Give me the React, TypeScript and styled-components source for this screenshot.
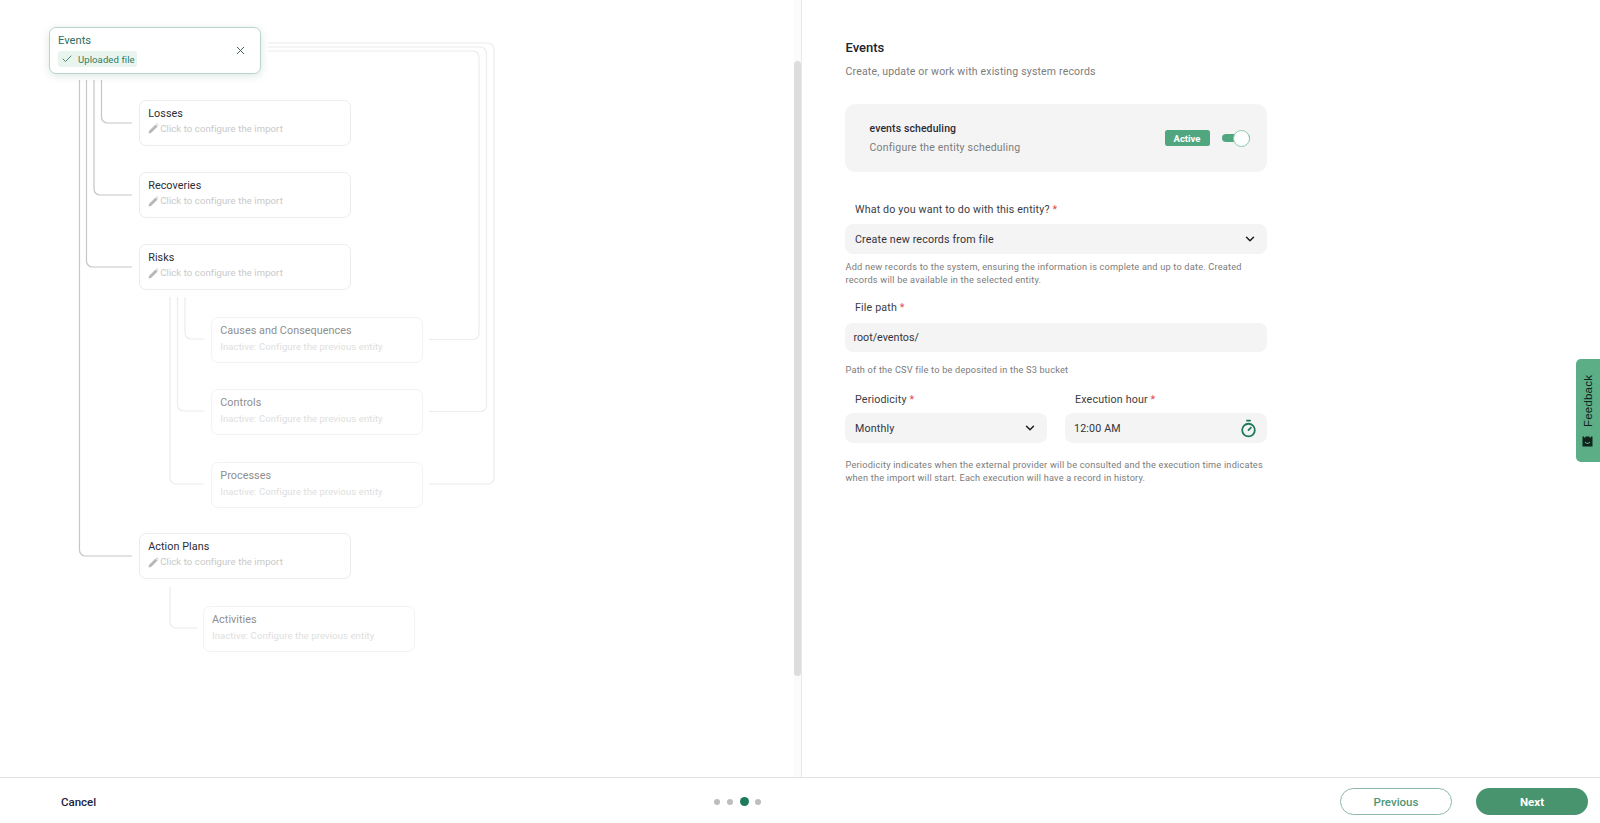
import React from 'react';
import styled, { createGlobalStyle } from 'styled-components';
import { Check, ChevronDown, Timer, X } from 'lucide-react';

const GlobalStyle = createGlobalStyle`
  html, body {
    margin: 0;
    padding: 0;
    background: #ffffff;
    font-family: Roboto, "Liberation Sans", sans-serif;
    overflow: hidden;
  }
  * {
    box-sizing: border-box;
  }
`;

type TreeNode = {
  title: string;
  x: number;
  y: number;
  inactive?: boolean;
};

const nodes: TreeNode[] = [
  { title: 'Losses', x: 139.2, y: 99.7 },
  { title: 'Recoveries', x: 139.2, y: 172 },
  { title: 'Risks', x: 139.2, y: 244.3 },
  { title: 'Causes and Consequences', x: 211.3, y: 316.7, inactive: true },
  { title: 'Controls', x: 211.3, y: 389, inactive: true },
  { title: 'Processes', x: 211.3, y: 461.7, inactive: true },
  { title: 'Action Plans', x: 139.2, y: 533.3 },
  { title: 'Activities', x: 203, y: 605.8, inactive: true },
];

// left links go from the parent down and into the node, right links go back to Events
const darkLinks = [
  'M101.5 80 V117 a6 6 0 0 0 6 6 H132',
  'M94 80 V189 a6 6 0 0 0 6 6 H132',
  'M86.5 80 V261 a6 6 0 0 0 6 6 H132',
  'M79.5 80 V550 a6 6 0 0 0 6 6 H132',
];

const lightLinks = [
  'M185 297 V333 a6 6 0 0 0 6 6 H204',
  'M177.5 297 V405 a6 6 0 0 0 6 6 H204',
  'M170 297 V478 a6 6 0 0 0 6 6 H204',
  'M170 587 V622 a6 6 0 0 0 6 6 H197',
  'M429 339.5 H473 a6 6 0 0 0 6 -6 V57 a6 6 0 0 0 -6 -6 H268',
  'M429 411.5 H480.5 a6 6 0 0 0 6 -6 V53 a6 6 0 0 0 -6 -6 H268',
  'M429 484 H488 a6 6 0 0 0 6 -6 V49 a6 6 0 0 0 -6 -6 H268',
];

const PencilIcon = () => (
  <PencilGlyph width="11" height="11" viewBox="0 0 12 12" aria-hidden="true">
    <path d="M0.6 11.4 L1.3 8.4 L8.2 1.5 L10.5 3.8 L3.6 10.7 Z" fill="#b8b8b8" />
    <path d="M8.9 0.8 L9.6 0.4 L11.6 2.4 L11.2 3.1 Z" fill="#b8b8b8" />
  </PencilGlyph>
);

const FeedbackIcon = () => (
  <FeedbackGlyph width="11" height="11" viewBox="0 0 11 11" aria-hidden="true">
    <path d="M0.5 0.5 H10.5 V10.5 H0.5 Z" fill="#10231b" />
    <path d="M2 0 H3.5 V1.5 H2 Z M7.5 0 H9 V1.5 H7.5 Z" fill="#5bae86" />
    <path d="M3 6 Q5.5 8.8 8 6" fill="none" stroke="#5bae86" strokeWidth="1.1" />
  </FeedbackGlyph>
);

const App = () => {
  return (
    <Page>
      <GlobalStyle />
      <Main>
        <TreePanel>
          <TreeCanvas>
            <Links width="520" height="680">
              {darkLinks.map((d) => (
                <path key={d} d={d} stroke="#c6c6c6" />
              ))}
              {lightLinks.map((d) => (
                <path key={d} d={d} stroke="#ececec" />
              ))}
            </Links>
            <RootNode>
              <div>
                <RootTitle>Events</RootTitle>
                <UploadedTag>
                  <Check size={12} color="#2f7d5d" strokeWidth={1.75} />
                  Uploaded file
                </UploadedTag>
              </div>
              <CloseButton>
                <X size={13} strokeWidth={1.75} />
              </CloseButton>
            </RootNode>
            {nodes.map((node) => (
              <NodeCard key={node.title} $x={node.x} $y={node.y} $inactive={node.inactive}>
                <NodeTitle $inactive={node.inactive}>{node.title}</NodeTitle>
                {node.inactive ? (
                  <NodeHint $inactive>Inactive: Configure the previous entity</NodeHint>
                ) : (
                  <NodeHint>
                    <PencilIcon />
                    Click to configure the import
                  </NodeHint>
                )}
              </NodeCard>
            ))}
          </TreeCanvas>
          <ScrollTrack>
            <ScrollThumb />
          </ScrollTrack>
        </TreePanel>

        <FormPanel>
          <FormColumn>
            <Title>Events</Title>
            <Subtitle>Create, update or work with existing system records</Subtitle>

            <ScheduleCard>
              <div>
                <ScheduleTitle>events scheduling</ScheduleTitle>
                <ScheduleText>Configure the entity scheduling</ScheduleText>
              </div>
              <ScheduleStatus>
                <ActiveBadge>Active</ActiveBadge>
                <Toggle>
                  <ToggleKnob />
                </Toggle>
              </ScheduleStatus>
            </ScheduleCard>

            <FieldLabel $top={31}>
              What do you want to do with this entity? <Required>*</Required>
            </FieldLabel>
            <SelectBox $top={7}>
              Create new records from file
              <ChevronDown size={14} color="#1c1c1c" strokeWidth={2.5} />
            </SelectBox>
            <HelpText $top={6}>
              Add new records to the system, ensuring the information is complete and up to date.
              Created records will be available in the selected entity.
            </HelpText>

            <FieldLabel $top={15}>
              File path <Required>*</Required>
            </FieldLabel>
            <TextBox>root/eventos/</TextBox>
            <HelpText $top={11}>Path of the CSV file to be deposited in the S3 bucket</HelpText>

            <FieldRow>
              <div>
                <FieldLabel>
                  Periodicity <Required>*</Required>
                </FieldLabel>
                <SelectBox $top={6}>
                  Monthly
                  <ChevronDown size={14} color="#1c1c1c" strokeWidth={2.5} />
                </SelectBox>
              </div>
              <div>
                <FieldLabel>
                  Execution hour <Required>*</Required>
                </FieldLabel>
                <TimeBox $top={6}>
                  12:00 AM
                  <Timer size={19} color="#1e7a5a" strokeWidth={2.25} />
                </TimeBox>
              </div>
            </FieldRow>
            <HelpText $top={15}>
              Periodicity indicates when the external provider will be consulted and the execution
              time indicates when the import will start. Each execution will have a record in
              history.
            </HelpText>
          </FormColumn>
        </FormPanel>
      </Main>

      <Footer>
        <CancelButton>Cancel</CancelButton>
        <Steps>
          <StepDot />
          <StepDot />
          <StepDot $current />
          <StepDot />
        </Steps>
        <FooterActions>
          <PreviousButton>Previous</PreviousButton>
          <NextButton>Next</NextButton>
        </FooterActions>
      </Footer>

      <FeedbackTab>
        <FeedbackIcon />
        Feedback
      </FeedbackTab>
    </Page>
  );
};

export default App;

const Page = styled.div`
  position: relative;
  width: 100%;
  height: 823px;
  display: flex;
  flex-direction: column;
  overflow: hidden;
`;

const Main = styled.main`
  flex: 1;
  min-height: 0;
  display: flex;
`;

const TreePanel = styled.section`
  width: 802px;
  display: flex;
  justify-content: space-between;
  border-right: 1px solid #e8e8e8;
`;

const TreeCanvas = styled.div`
  position: relative;
  width: 520px;
  height: 680px;
`;

const Links = styled.svg`
  position: absolute;
  inset: 0;
  fill: none;
  stroke-width: 1.2;
`;

const RootNode = styled.div`
  position: absolute;
  left: 49px;
  top: 27px;
  width: 212px;
  height: 47px;
  padding: 6px 10px 0 8px;
  display: flex;
  justify-content: space-between;
  background: #ffffff;
  border: 1px solid #b7d5c8;
  border-radius: 7px;
  box-shadow: 0 2px 8px rgba(60, 120, 95, 0.18);
`;

const RootTitle = styled.div`
  font-size: 11.2px;
  line-height: 14px;
  color: #2d6f63;
`;

const UploadedTag = styled.div`
  margin-top: 3px;
  height: 16px;
  padding: 0 2px 0 3px;
  display: inline-flex;
  align-items: center;
  gap: 5px;
  border-radius: 3px;
  background: #e9f4ef;
  font-size: 9.5px;
  letter-spacing: 0.1px;
  color: #2f7d5d;
`;

const CloseButton = styled.div`
  margin: 8px 3px 0 0;
  height: 13px;
  color: #3a5a50;
`;

const NodeCard = styled.div<{ $x: number; $y: number; $inactive?: boolean }>`
  position: absolute;
  left: ${(p) => p.$x}px;
  top: ${(p) => p.$y}px;
  width: 211.5px;
  height: 46px;
  padding: 6px 8px 0;
  background: #ffffff;
  border: 1px solid ${(p) => (p.$inactive ? '#f3f3f3' : '#ececec')};
  border-radius: 7px;
`;

const NodeTitle = styled.div<{ $inactive?: boolean }>`
  font-size: 10.8px;
  line-height: 14px;
  letter-spacing: 0.05px;
  color: ${(p) => (p.$inactive ? '#8e8e8e' : '#2c2c36')};
`;

const NodeHint = styled.div<{ $inactive?: boolean }>`
  margin-top: ${(p) => (p.$inactive ? 2 : 1)}px;
  display: flex;
  align-items: center;
  font-size: 9.5px;
  line-height: 14px;
  letter-spacing: 0.1px;
  color: ${(p) => (p.$inactive ? '#dedede' : '#c8c8c8')};
`;

const PencilGlyph = styled.svg`
  margin-right: 1px;
`;

const ScrollTrack = styled.div`
  width: 7px;
  padding-top: 61px;
  background: #fbfbfb;
`;

const ScrollThumb = styled.div`
  height: 615px;
  border-radius: 4px;
  background: #dddddd;
`;

const FormPanel = styled.section`
  flex: 1;
  padding: 40px 0 0 43px;
`;

const FormColumn = styled.div`
  width: 422px;
`;

const Title = styled.h2`
  margin: 0;
  padding-left: 0.5px;
  font-size: 13px;
  line-height: 16px;
  font-weight: 500;
  color: #20242c;
`;

const Subtitle = styled.p`
  margin: 9px 0 0;
  padding-left: 0.5px;
  font-size: 10.5px;
  line-height: 14px;
  letter-spacing: 0.18px;
  color: #7c7c7c;
`;

const ScheduleCard = styled.div`
  margin-top: 25px;
  height: 68px;
  padding: 0 17.5px 0 24.5px;
  display: flex;
  align-items: center;
  justify-content: space-between;
  border-radius: 10px;
  background: #f4f4f4;
`;

const ScheduleTitle = styled.div`
  font-size: 10.5px;
  line-height: 14px;
  font-weight: 500;
  letter-spacing: 0.1px;
  color: #2c2c36;
`;

const ScheduleText = styled.div`
  margin-top: 5px;
  font-size: 10.5px;
  line-height: 14px;
  letter-spacing: 0.2px;
  color: #7c7c7c;
`;

const ScheduleStatus = styled.div`
  display: flex;
  align-items: center;
  gap: 12px;
`;

const ActiveBadge = styled.span`
  width: 45px;
  height: 16px;
  display: flex;
  align-items: center;
  justify-content: center;
  border-radius: 2.5px;
  background: #4fa67f;
  font-size: 9.5px;
  font-weight: 700;
  color: #ffffff;
`;

const Toggle = styled.div`
  position: relative;
  width: 28px;
  height: 8px;
  border-radius: 4px;
  background: #4fa67f;
`;

const ToggleKnob = styled.span`
  position: absolute;
  right: 0;
  top: -4.5px;
  width: 17px;
  height: 17px;
  border: 1px solid #8fc9ad;
  border-radius: 50%;
  background: #ffffff;
`;

const FieldLabel = styled.label<{ $top?: number }>`
  display: block;
  margin-top: ${(p) => p.$top ?? 0}px;
  padding-left: 10px;
  font-size: 10.7px;
  line-height: 14px;
  letter-spacing: 0.15px;
  color: #3c3c44;
`;

const Required = styled.span`
  color: #e0484d;
`;

const SelectBox = styled.div<{ $top?: number }>`
  margin-top: ${(p) => p.$top ?? 8}px;
  height: 30px;
  padding: 0 10px;
  display: flex;
  align-items: center;
  justify-content: space-between;
  border-radius: 8px;
  background: #f4f4f4;
  font-size: 10.7px;
  letter-spacing: 0.15px;
  color: #33333b;
`;

const TextBox = styled(SelectBox)`
  height: 29px;
  padding: 0 8.5px;
  letter-spacing: 0;
`;

const TimeBox = styled(SelectBox)`
  padding: 0 9px;
`;

const HelpText = styled.p<{ $top?: number }>`
  margin: ${(p) => p.$top ?? 7}px 0 0;
  padding-left: 0.5px;
  font-size: 9.2px;
  line-height: 13px;
  letter-spacing: 0.2px;
  color: #7c7c7c;
`;

const FieldRow = styled.div`
  margin-top: 17px;
  display: grid;
  grid-template-columns: 202px 202px;
  justify-content: space-between;
`;

const Footer = styled.footer`
  height: 46px;
  flex: none;
  padding: 2px 12px 0 61px;
  display: grid;
  grid-template-columns: 651px auto 1fr;
  align-items: center;
  border-top: 1px solid #e2e2e2;
`;

const CancelButton = styled.button`
  justify-self: start;
  padding: 1px 0 0;
  border: 0;
  background: none;
  font: 500 11.5px Roboto, sans-serif;
  color: #1b2440;
`;

const Steps = styled.div`
  display: flex;
  align-items: center;
  gap: 3px;
`;

const StepDot = styled.span<{ $current?: boolean }>`
  width: ${(p) => (p.$current ? 9 : 6)}px;
  height: ${(p) => (p.$current ? 9 : 6)}px;
  margin: 0 ${(p) => (p.$current ? 1.5 : 2)}px;
  border-radius: 50%;
  background: ${(p) => (p.$current ? '#1f7a59' : '#bdbdbd')};
`;

const FooterActions = styled.div`
  justify-self: end;
  display: flex;
  gap: 24px;
`;

const PreviousButton = styled.button`
  width: 112px;
  height: 27px;
  border: 1px solid #8fb9a6;
  border-radius: 14px;
  background: #ffffff;
  font: 500 11.5px Roboto, sans-serif;
  color: #4f9676;
`;

const NextButton = styled.button`
  width: 112px;
  height: 27px;
  border: 0;
  border-radius: 14px;
  background: #47946f;
  font: 700 11.5px Roboto, sans-serif;
  color: #ffffff;
`;

const FeedbackTab = styled.div`
  position: absolute;
  right: 0;
  top: 359px;
  width: 24px;
  height: 103px;
  padding-top: 15px;
  display: flex;
  align-items: center;
  justify-content: flex-start;
  gap: 9px;
  writing-mode: vertical-rl;
  transform: rotate(180deg);
  border-radius: 0 5px 5px 0;
  background: #5bae86;
  font: 400 11.5px "Liberation Sans", sans-serif;
  letter-spacing: 0.2px;
  color: #10231b;
`;

const FeedbackGlyph = styled.svg`
  transform: rotate(180deg);
`;
